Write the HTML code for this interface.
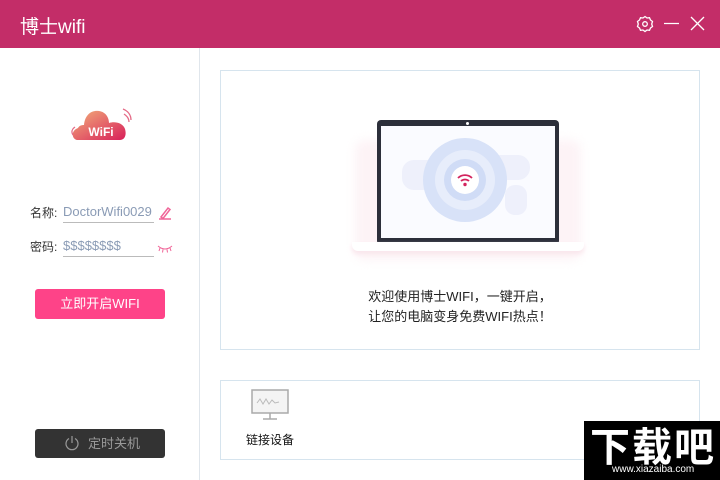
<html><head><style>
body{margin:0;width:720px;height:480px;position:relative;overflow:hidden;background:#fff;font-family:"Liberation Sans","Noto Sans CJK SC",sans-serif}
.a{position:absolute}
</style></head><body>
<div class="a" style="left:0;top:0;width:720px;height:48px;background:#c32d68"></div>
<div class="a" style="left:20px;top:12px;color:#fff;font-size:19px">博士wifi</div>
<svg class="a" style="left:636px;top:14px" width="80" height="20" viewBox="0 0 80 20">
<g fill="none" stroke="#fff" stroke-width="1.3">
<path d="M9 2.5l2 1.5 2.5-.3 1 2.3 2 1.5-.8 2.5.8 2.5-2 1.5-1 2.3-2.5-.3-2 1.5-2-1.5-2.5.3-1-2.3-2-1.5.8-2.5-.8-2.5 2-1.5 1-2.3 2.5.3z"/>
<circle cx="9" cy="10" r="2.3"/>
<path d="M28 9.5h15M55 3l13 13M68 3l-13 13"/></g></svg>
<div class="a" style="left:199px;top:48px;width:1px;height:432px;background:#e0e6ec"></div>
<svg class="a" style="left:68px;top:103px" width="64" height="40" viewBox="0 0 64 40">
<defs><linearGradient id="g" x1="0" y1="0" x2="1" y2="1"><stop offset="0" stop-color="#f2b07a"/><stop offset="1" stop-color="#d8205a"/></linearGradient></defs>
<path d="M10 37c-6 0-8-9 0-12 1-2 3-3 6-3 1-10 7-15 15-14 7 1 10 7 10 12 6-2 14 0 16 6 2 7-1 11-5 11z" fill="url(#g)"/>
<path d="M5 32c-2-3-1-6 2-8M56 11c3 2 5 5 5 8M55 6c5 2 8 6 8 11" stroke="#e46a86" fill="none" stroke-width="1.3"/>
<text x="33" y="33" text-anchor="middle" fill="#fff" font-size="12" font-weight="bold" font-family="Liberation Sans">WiFi</text></svg>
<div class="a" style="left:30px;top:204px;font-size:12px;color:#333">名称:</div>
<div class="a" style="left:63px;top:204px;width:91px;height:18px;border-bottom:1px solid #bbb;font-size:13px;color:#8a9bb5;white-space:nowrap">DoctorWifi0029</div>
<svg class="a" style="left:158px;top:206px" width="14" height="14"><path d="M3 11l7-9 2 1.5-7 9zM1 13h12" stroke="#f06598" stroke-width="1.5" fill="none"/></svg>
<div class="a" style="left:30px;top:238px;font-size:12px;color:#333">密码:</div>
<div class="a" style="left:63px;top:238px;width:91px;height:18px;border-bottom:1px solid #bbb;font-size:13px;color:#8a9bb5">$$$$$$$$</div>
<svg class="a" style="left:157px;top:244px" width="16" height="10"><path d="M1 2q7 6 14 0M3 4l-1 3M6 5.5l-.5 3M10 5.5l.5 3M13 4l1 3" stroke="#f06598" fill="none"/></svg>
<div class="a" style="left:35px;top:289px;width:130px;height:30px;background:#fe4388;border-radius:3px;color:#fff;font-size:13px;text-align:center;line-height:30px">立即开启WIFI</div>
<div class="a" style="left:35px;top:429px;width:130px;height:29px;background:#333;border-radius:3px;color:#999;font-size:13px;line-height:29px"><svg style="position:absolute;left:29px;top:6px" width="16" height="16"><path d="M5 3.5a6 6 0 1 0 6 0M8 1v7" stroke="#999" fill="none" stroke-width="1.2"/></svg><span style="position:absolute;left:53px">定时关机</span></div>
<div class="a" style="left:220px;top:70px;width:478px;height:278px;border:1px solid #d6e4ee"></div>
<div class="a" style="left:355px;top:140px;width:226px;height:120px;background:#fdf3f6;border-radius:10px;filter:blur(5px)"></div>
<div class="a" style="left:377px;top:120px;width:182px;height:125px;background:#2c2f3a;border-radius:4px"></div>
<div class="a" style="left:381px;top:126px;width:174px;height:112px;background:#fafbff"></div>
<div class="a" style="left:466px;top:122px;width:3px;height:3px;background:#fff;border-radius:50%"></div>
<div class="a" style="left:352px;top:242px;width:232px;height:9px;background:#fff;border-radius:0 0 6px 6px;box-shadow:0 3px 5px #f9e6ec"></div>
<div class="a" style="left:402px;top:160px;width:50px;height:30px;background:#eef0fb;border-radius:12px"></div>
<div class="a" style="left:480px;top:155px;width:50px;height:25px;background:#eef0fb;border-radius:12px"></div>
<div class="a" style="left:505px;top:185px;width:22px;height:30px;background:#eef0fb;border-radius:10px"></div>
<div class="a" style="left:423px;top:138px;width:84px;height:84px;border-radius:50%;background:#d8e2f8"></div>
<div class="a" style="left:435px;top:150px;width:60px;height:60px;border-radius:50%;background:#e7edfb"></div>
<div class="a" style="left:444px;top:159px;width:42px;height:42px;border-radius:50%;background:#d0dcf6"></div>
<div class="a" style="left:451px;top:166px;width:28px;height:28px;border-radius:50%;background:#fff"></div>
<svg class="a" style="left:456px;top:172px" width="18" height="16"><path d="M2 6a10 10 0 0 1 14 0M5 9a6 6 0 0 1 8 0" stroke="#d3245e" stroke-width="1.8" fill="none"/><circle cx="9" cy="12.5" r="1.7" fill="#d3245e"/></svg>
<div class="a" style="left:220px;top:287px;width:480px;text-align:center;font-size:13px;color:#222;line-height:20px">欢迎使用博士WIFI，一键开启，<br>让您的电脑变身免费WIFI热点！</div>
<div class="a" style="left:220px;top:380px;width:478px;height:78px;border:1px solid #d6e4ee"></div>
<svg class="a" style="left:251px;top:389px" width="38" height="32"><rect x="1" y="1" width="36" height="23" fill="#f4f4f4" stroke="#aaa" stroke-width="1.5"/><path d="M6 14l3-4 3 5 3-5 3 5 3-4 3 3 4-1" stroke="#bbb" fill="none"/><path d="M19 24v6M12 30h14" stroke="#aaa" stroke-width="1.5"/></svg>
<div class="a" style="left:246px;top:431px;font-size:12px;color:#111">链接设备</div>
<div class="a" style="left:584px;top:421px;width:136px;height:59px;background:#000"></div>
<div class="a" style="left:590px;top:419px;color:#fff;font-size:40px;font-weight:bold;letter-spacing:2px;font-family:'Noto Sans CJK SC',sans-serif;line-height:50px">下载吧</div>
<div class="a" style="left:612px;top:464px;color:#fff;font-size:10px">www.xiazaiba.com</div>
</body></html>
